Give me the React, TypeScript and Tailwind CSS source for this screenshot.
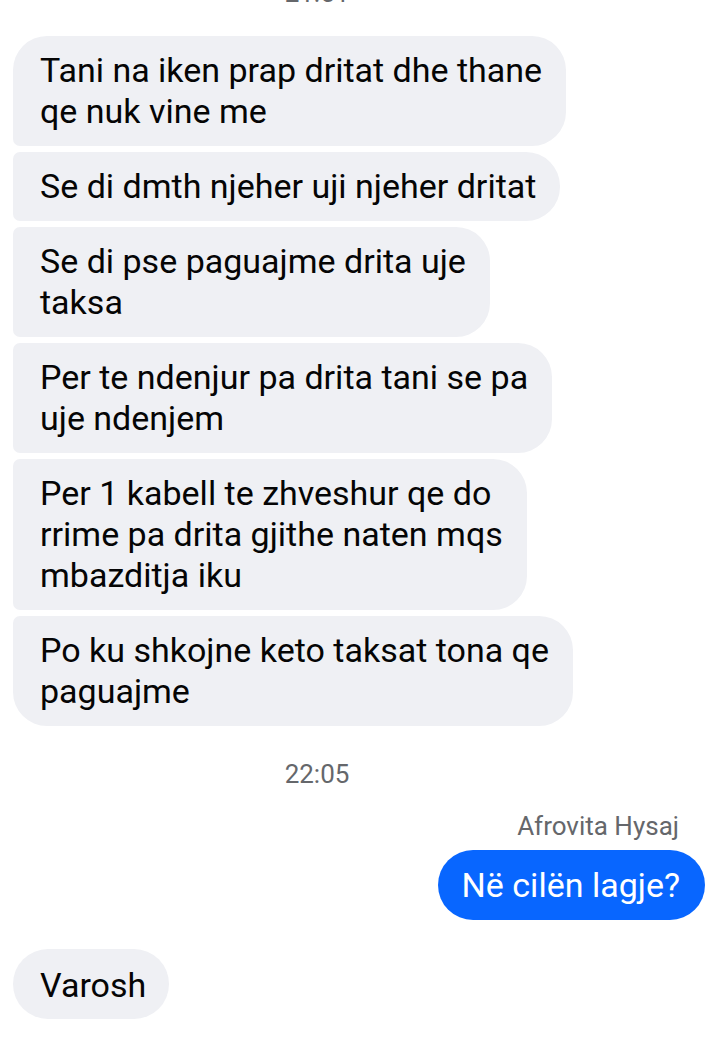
import React from "react";

const font = { fontFamily: "Roboto, 'Noto Sans', sans-serif" };

type Msg = { lines: string[]; pos: "first" | "mid" | "last" | "single" };

const group: Msg[] = [
  { lines: ["Tani na iken prap dritat dhe thane", "qe nuk vine me"], pos: "first" },
  { lines: ["Se di dmth njeher uji njeher dritat"], pos: "mid" },
  { lines: ["Se di pse paguajme drita uje", "taksa"], pos: "mid" },
  { lines: ["Per te ndenjur pa drita tani se pa", "uje ndenjem"], pos: "mid" },
  { lines: ["Per 1 kabell te zhveshur qe do", "rrime pa drita gjithe naten mqs", "mbazditja iku"], pos: "mid" },
  { lines: ["Po ku shkojne keto taksat tona qe", "paguajme"], pos: "last" },
];

function radius(pos: Msg["pos"]) {
  if (pos === "first") return "rounded-tl-[34px] rounded-bl-[7px] rounded-r-[34px]";
  if (pos === "mid") return "rounded-l-[7px] rounded-r-[34px]";
  if (pos === "last") return "rounded-tl-[7px] rounded-bl-[34px] rounded-r-[34px]";
  return "rounded-[35px]";
}

function Bubble({ m }: { m: Msg }) {
  return (
    <div
      className={`w-fit bg-[#eff0f4] text-[#050505] pl-[27px] pr-[24px] py-[14px] text-[34px] leading-[41px] whitespace-nowrap ${radius(m.pos)}`}
    >
      {m.lines.map((l, i) => (
        <div key={i}>{l}</div>
      ))}
    </div>
  );
}

export default function App() {
  return (
    <div className="w-[720px] h-[1047px] bg-white overflow-hidden" style={font}>
      <div className="relative h-[36px]">
        <div className="absolute left-0 w-[634px] top-[-22px] text-center text-[26px] leading-[30px] text-[#65676b]">
          21:51
        </div>
      </div>
      <div className="flex flex-col gap-[6px] pl-[13px]">
        {group.map((m, i) => (
          <Bubble key={i} m={m} />
        ))}
      </div>
      <div className="w-[634px] text-center text-[26px] leading-[30px] text-[#65676b] mt-[33px]">
        22:05
      </div>
      <div className="flex flex-col items-end pr-[15px] mt-[22px]">
        <div className="pr-[26px] text-[26px] leading-[30px] text-[#65676b]">Afrovita Hysaj</div>
        <div className="mt-[9px] bg-[#0866ff] text-white rounded-[35px] pl-[24px] pr-[25px] py-[14px] text-[34px] leading-[42px] whitespace-nowrap">
          Në cilën lagje?
        </div>
      </div>
      <div className="pl-[13px] mt-[29px]">
        <div className="w-fit bg-[#eff0f4] text-[#050505] rounded-[35px] pl-[27px] pr-[23px] pt-[15px] pb-[13px] text-[34px] leading-[42px]">
          Varosh
        </div>
      </div>
    </div>
  );
}
